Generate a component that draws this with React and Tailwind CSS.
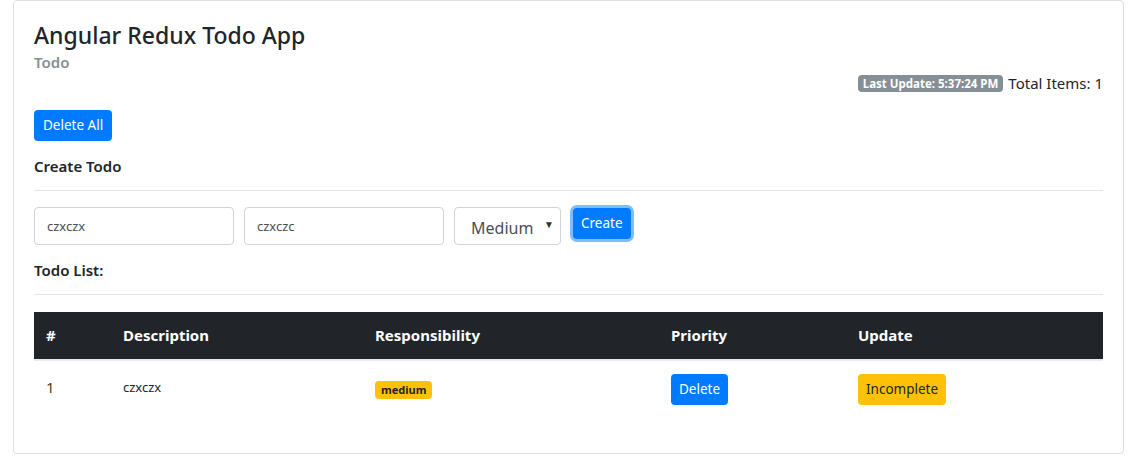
import React from 'react';

const todos = [
    { id: 1, description: 'czxczx', responsibility: 'medium' }
];

const App = () => {
    return (
        <div className="bg-white min-h-[465px] text-[#212529] font-['Noto_Sans',_'Liberation_Sans',_sans-serif]">
            <div className="ml-[13px] w-[1111px] border border-[#dfdfdf] rounded-[4px] px-5 pt-5 pb-5">
                {/* header */}
                <h3 className="text-[23px] leading-[29px] font-medium">Angular Redux Todo App</h3>
                <h6 className="text-[15px] leading-[24px] font-semibold text-[#868e96]">Todo</h6>
                <div className="flex justify-end items-center gap-[5px] h-[18px]">
                    <span className="bg-[#868e96] text-white text-[11.5px] font-bold leading-[17px] px-[5px] rounded-[4px]">
                        Last Update: 5:37:24 PM
                    </span>
                    <span className="text-[15px]">Total Items: 1</span>
                </div>

                <button className="mt-[18px] h-[31px] px-[9px] bg-[#007bff] text-white text-[13.5px] rounded-[4px]">
                    Delete All
                </button>

                {/* create todo */}
                <h5 className="mt-[13px] text-[15px] leading-[24px] font-semibold">Create Todo</h5>
                <hr className="mt-3 border-0 border-t border-[rgba(0,0,0,0.1)]" />
                <div className="mt-4 flex items-start">
                    <input
                        defaultValue="czxczx"
                        className="w-[200px] h-[38px] border border-[#ced4da] rounded-[4px] px-3 text-[13px] text-[#495057] outline-none"
                    />
                    <input
                        defaultValue="czxczc"
                        className="ml-[10px] w-[200px] h-[38px] border border-[#ced4da] rounded-[4px] px-3 text-[13px] text-[#495057] outline-none"
                    />
                    <div className="relative ml-[10px] w-[107px] h-[38px] border border-[#ced4da] rounded-[4px] flex items-center pl-4 text-[16px] text-[#495057]">
                        <span className="mt-[4px]">Medium</span>
                        <span className="absolute right-[6px] top-[9px] text-[10px] text-[#333]">▼</span>
                    </div>
                    <button className="ml-[12px] mt-[1px] h-[31px] px-2 bg-[#007bff] text-white text-[13.5px] rounded-[4px] shadow-[0_0_0_3px_rgba(0,123,255,0.5)]">
                        Create
                    </button>
                </div>

                {/* list */}
                <h5 className="mt-[13px] text-[15px] leading-[24px] font-semibold">Todo List:</h5>
                <hr className="mt-3 border-0 border-t border-[rgba(0,0,0,0.1)]" />
                <table className="mt-[17px] mb-4 w-full border-collapse table-fixed">
                    <thead>
                        <tr className="bg-[#212529] text-white text-[15px] font-bold text-left">
                            <th className="w-[77px] h-[48px] px-3 border-b-2 border-[#e9ecef]">#</th>
                            <th className="w-[252px] px-3 border-b-2 border-[#e9ecef]">Description</th>
                            <th className="w-[296px] px-3 border-b-2 border-[#e9ecef]">Responsibility</th>
                            <th className="w-[187px] px-3 border-b-2 border-[#e9ecef]">Priority</th>
                            <th className="px-3 border-b-2 border-[#e9ecef]">Update</th>
                        </tr>
                    </thead>
                    <tbody>
                        {todos.map(todo => (
                            <tr key={todo.id} className="align-top">
                                <td className="px-3 pt-[15px] text-[15px] text-[#5c4300]">{todo.id}</td>
                                <td className="px-3 pt-[17px] text-[13px]">{todo.description}</td>
                                <td className="px-3 pt-[15px]">
                                    <span className="inline-block bg-[#ffc107] text-[#212529] text-[11px] font-bold leading-[18px] px-[6px] rounded-[4px]">
                                        {todo.responsibility}
                                    </span>
                                </td>
                                <td className="px-3 pt-[13px] pb-3">
                                    <button className="h-[31px] px-2 bg-[#007bff] text-white text-[13.5px] rounded-[4px]">
                                        Delete
                                    </button>
                                </td>
                                <td className="px-3 pt-[13px] pb-3">
                                    <button className="h-[31px] px-2 bg-[#ffc107] text-[#212529] text-[13.5px] rounded-[4px]">
                                        Incomplete
                                    </button>
                                </td>
                            </tr>
                        ))}
                    </tbody>
                </table>
            </div>
        </div>
    );
};

export default App;
